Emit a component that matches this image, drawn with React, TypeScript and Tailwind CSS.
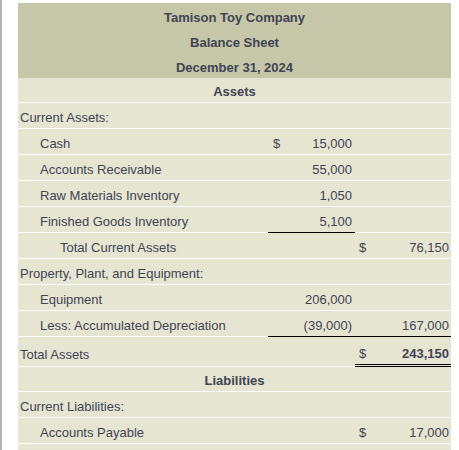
import React from "react";

type Row = {
  label: string;
  indent?: 0 | 1 | 2;
  d1?: boolean;
  v1?: string;
  d2?: boolean;
  v2?: string;
  bold2?: boolean;
  line1?: boolean;
  line2?: boolean;
  double2?: boolean;
  tall?: boolean;
};

const rows: Row[] = [
  { label: "Current Assets:" },
  { label: "Cash", indent: 1, d1: true, v1: "15,000" },
  { label: "Accounts Receivable", indent: 1, v1: "55,000" },
  { label: "Raw Materials Inventory", indent: 1, v1: "1,050" },
  { label: "Finished Goods Inventory", indent: 1, v1: "5,100", line1: true },
  { label: "Total Current Assets", indent: 2, d2: true, v2: "76,150" },
  { label: "Property, Plant, and Equipment:" },
  { label: "Equipment", indent: 1, v1: "206,000" },
  { label: "Less: Accumulated Depreciation", indent: 1, v1: "(39,000)", v2: "167,000", line1: true, line2: true },
  { label: "Total Assets", d2: true, v2: "243,150", bold2: true, double2: true, tall: true },
];

const liabilities: Row[] = [
  { label: "Current Liabilities:" },
  { label: "Accounts Payable", indent: 1, d2: true, v2: "17,000" },
  { label: "" },
];

function Line({ r }: { r: Row }) {
  const pad = r.indent === 2 ? "pl-[42px]" : r.indent === 1 ? "pl-[22px]" : "pl-[2px]";
  const h = r.tall ? "h-[30px] pt-[7px]" : "h-[26px] pt-[5px]";
  return (
    <div className={`flex ${h.split(" ")[0]}`}>
      <div className={`flex-1 flex items-center border-b border-white ${pad} ${h.split(" ")[1]}`}>{r.label}</div>
      <div
        className={`w-[87px] flex items-center justify-between pl-[5px] pr-[3px] border-b ${h.split(" ")[1]} ${
          r.line1 ? "border-black" : "border-white"
        }`}
      >
        <span>{r.d1 ? "$" : ""}</span>
        <span>{r.v1}</span>
      </div>
      <div
        className={`w-[96px] flex items-center justify-between pl-[4px] pr-[2px] ${h.split(" ")[1]} ${
          r.double2 ? "border-b-[3px] border-double border-black" : r.line2 ? "border-b border-black" : "border-b border-white"
        }`}
      >
        <span>{r.d2 ? "$" : ""}</span>
        <span className={r.bold2 ? "font-bold" : ""}>{r.v2}</span>
      </div>
    </div>
  );
}

export default function App() {
  return (
    <div className="w-[459px] h-[450px] overflow-hidden bg-white flex font-['Liberation_Sans',Arial,sans-serif] text-[13px] text-[#3f4453]">
      <div className="w-[2px] bg-[#b3b3b3]" />
      <div className="ml-[16px] w-[433px] pt-[3px]">
        {/* Title block */}
        <div className="bg-[#c6c7a8] font-bold text-center">
          <div className="h-[25px] pt-[4px] flex items-center justify-center">Tamison Toy Company</div>
          <div className="h-[25px] pt-[4px] flex items-center justify-center">Balance Sheet</div>
          <div className="h-[25px] pt-[4px] flex items-center justify-center">December 31, 2024</div>
        </div>

        <div className="bg-[#e6e5d2]">
          <div className="h-[25px] pt-[4px] flex items-center justify-center font-bold border-b border-white">Assets</div>
          {rows.map((r, i) => (
            <Line key={i} r={r} />
          ))}
          <div className="h-[25px] pt-[4px] flex items-center justify-center font-bold border-b border-white">Liabilities</div>
          {liabilities.map((r, i) => (
            <Line key={i} r={r} />
          ))}
        </div>
      </div>
    </div>
  );
}
